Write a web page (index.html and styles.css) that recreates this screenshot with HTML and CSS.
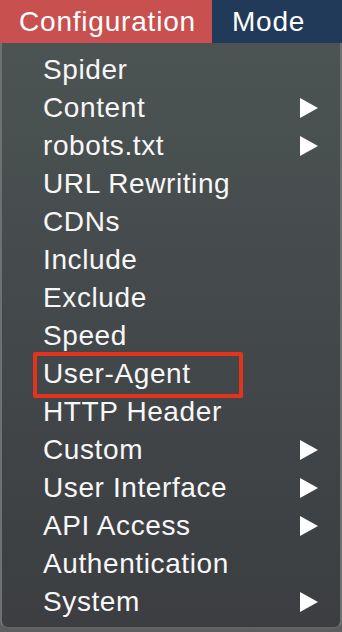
FILE: index.html
```html
<!DOCTYPE html>
<html>
<head>
<meta charset="utf-8">
<link rel="stylesheet" href="styles.css">
</head>
<body>
<div class="bar">
  <div class="bar-item bar-active">Configuration</div>
  <div class="bar-item bar-mode">Mode</div>
</div>
<div class="menu">
  <div class="item">Spider</div>
  <div class="item">Content<span class="arrow"></span></div>
  <div class="item">robots.txt<span class="arrow"></span></div>
  <div class="item">URL Rewriting</div>
  <div class="item">CDNs</div>
  <div class="item">Include</div>
  <div class="item">Exclude</div>
  <div class="item">Speed</div>
  <div class="item"><span class="mark">User-Agent</span></div>
  <div class="item">HTTP Header</div>
  <div class="item">Custom<span class="arrow"></span></div>
  <div class="item">User Interface<span class="arrow"></span></div>
  <div class="item">API Access<span class="arrow"></span></div>
  <div class="item">Authentication</div>
  <div class="item">System<span class="arrow"></span></div>
</div>
</body>
</html>
```
FILE: styles.css
```css
html, body {
  margin: 0;
  padding: 0;
}
body {
  width: 342px;
  height: 632px;
  background: #5b5d5f;
  font-family: "Liberation Sans", Arial, sans-serif;
  color: #f7f7f7;
  overflow: hidden;
}
.bar {
  display: flex;
  height: 43px;
}
.bar-item {
  font-size: 28px;
  line-height: 43px;
  letter-spacing: 0.8px;
  color: #ffffff;
}
.bar-active {
  background: #c8504f;
  width: 212px;
  padding-left: 19px;
  box-sizing: border-box;
}
.bar-mode {
  background: #223a5a;
  flex: 1;
  padding-left: 20px;
}
.menu {
  height: 586px;
  box-sizing: border-box;
  padding-top: 8px;
  background: linear-gradient(#4c5453, #43484a 50%, #3c3e41);
  border-left: 2px solid #6d7171;
  border-right: 2px solid #6d7171;
  border-bottom: 2px solid #606264;
  border-radius: 0 0 8px 8px;
}
.item {
  display: flex;
  align-items: center;
  height: 38px;
  padding-left: 41px;
  padding-right: 22px;
  font-size: 28px;
  letter-spacing: 0.6px;
  position: relative;
}
.arrow {
  margin-left: auto;
  width: 0;
  height: 0;
  border-top: 10px solid transparent;
  border-bottom: 10px solid transparent;
  border-left: 18px solid #ffffff;
}
.mark {
  position: relative;
}
.mark::after {
  content: "";
  position: absolute;
  left: -10px;
  top: -6px;
  width: 202px;
  height: 38px;
  border: 4px solid #e2331f;
  border-radius: 2px;
}
```
